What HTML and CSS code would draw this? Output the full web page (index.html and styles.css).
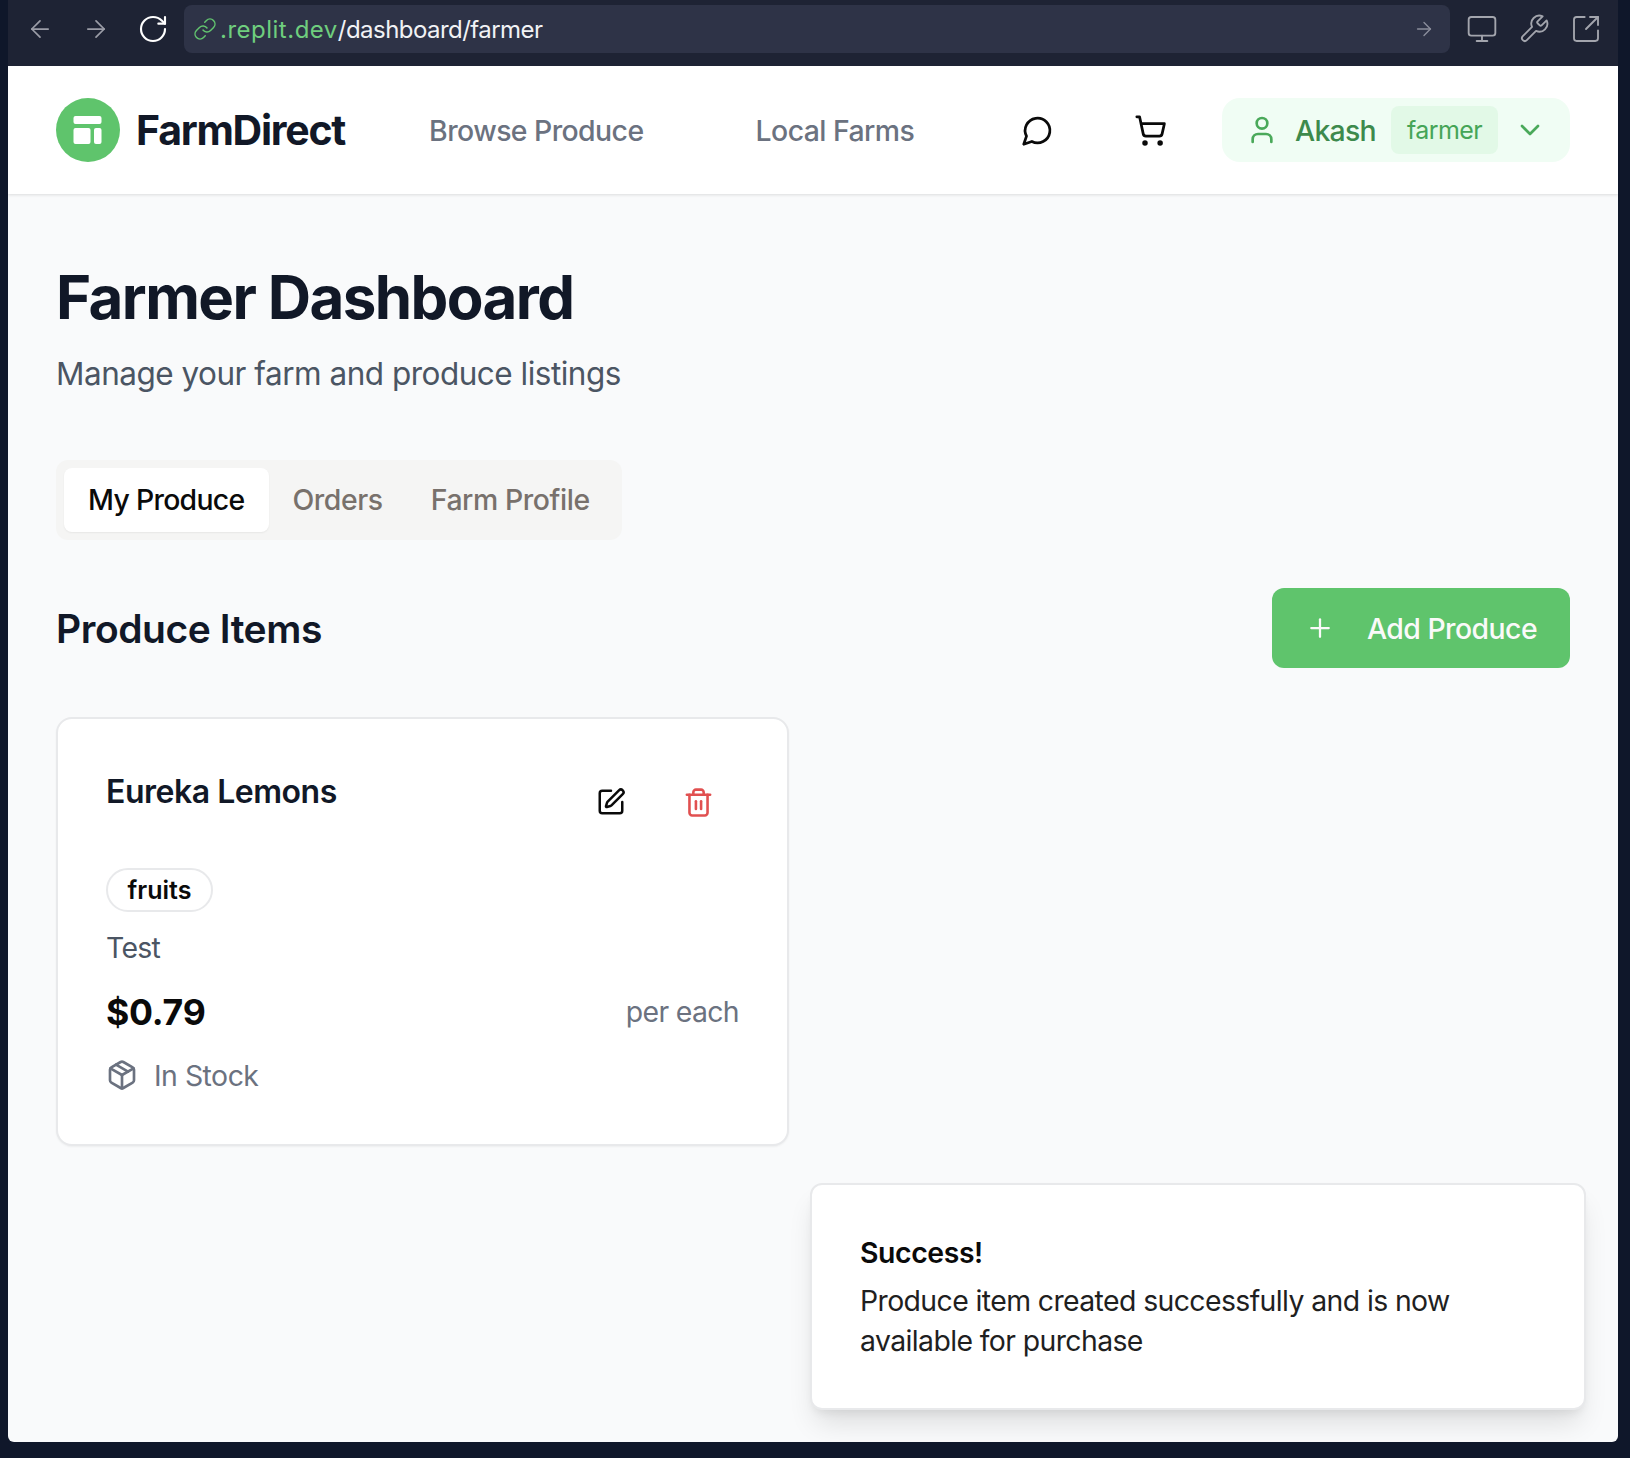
FILE: index.html
```html
<!DOCTYPE html>
<html>
<head>
    <title>FarmDirect</title>
    <link rel="stylesheet" href="styles.css">
</head>
<body>
    <div class="browser-bar">
        <svg class="bar-icon dim" viewBox="0 0 24 24"><path d="m12 19-7-7 7-7"/><path d="M19 12H5"/></svg>
        <svg class="bar-icon dim" viewBox="0 0 24 24"><path d="M5 12h14"/><path d="m12 5 7 7-7 7"/></svg>
        <svg class="bar-icon reload" viewBox="0 0 24 24"><path d="M21 12a9 9 0 1 1-9-9c2.52 0 4.93 1 6.74 2.74L21 8"/><path d="M21 3v5h-5"/></svg>
        <div class="address">
            <svg class="link-icon" viewBox="0 0 24 24"><path d="M10 13a5 5 0 0 0 7.54.54l3-3a5 5 0 0 0-7.07-7.07l-1.72 1.71"/><path d="M14 11a5 5 0 0 0-7.54-.54l-3 3a5 5 0 0 0 7.07 7.07l1.71-1.71"/></svg>
            <span class="url"><span class="host">.replit.dev</span>/dashboard/farmer</span>
            <svg class="go-icon" viewBox="0 0 24 24"><path d="M5 12h14"/><path d="m12 5 7 7-7 7"/></svg>
        </div>
        <div class="bar-tools">
            <svg class="tool-icon" viewBox="0 0 24 24"><rect x="2" y="3" width="20" height="14" rx="2"/><path d="M8 21h8"/><path d="M12 17v4"/></svg>
            <svg class="tool-icon" viewBox="0 0 24 24"><path d="M14.7 6.3a1 1 0 0 0 0 1.4l1.6 1.6a1 1 0 0 0 1.4 0l3.77-3.77a6 6 0 0 1-7.94 7.94l-6.91 6.91a2.12 2.12 0 0 1-3-3l6.91-6.91a6 6 0 0 1 7.94-7.94l-3.76 3.76z"/></svg>
            <svg class="tool-icon" viewBox="0 0 24 24"><path d="M21 13v6a2 2 0 0 1-2 2H5a2 2 0 0 1-2-2V5a2 2 0 0 1 2-2h6"/><path d="m21 3-9 9"/><path d="M15 3h6v6"/></svg>
        </div>
    </div>

    <div class="page">
        <header class="topnav">
            <div class="brand">
                <div class="logo">
                    <svg viewBox="0 0 64 64"><rect x="17.5" y="18" width="28" height="8" rx="2"/><rect x="17.5" y="30" width="17" height="16" rx="2"/><rect x="38" y="30" width="7.5" height="16" rx="2"/></svg>
                </div>
                <span class="brand-name">FarmDirect</span>
            </div>
            <nav class="links">
                <a class="link">Browse Produce</a>
                <a class="link">Local Farms</a>
            </nav>
            <svg class="nav-icon chat" viewBox="0 0 24 24"><path d="M7.9 20A9 9 0 1 0 4 16.1L2 22Z"/></svg>
            <svg class="nav-icon cart" viewBox="0 0 24 24"><circle cx="8" cy="21" r="1"/><circle cx="19" cy="21" r="1"/><path d="M2.05 2.05h2l2.66 12.42a2 2 0 0 0 2 1.58h9.78a2 2 0 0 0 1.95-1.57l1.65-7.43H5.12"/></svg>
            <div class="user-pill">
                <svg class="user-icon" viewBox="0 0 24 24"><path d="M19 21v-2a4 4 0 0 0-4-4H9a4 4 0 0 0-4 4v2"/><circle cx="12" cy="7" r="4"/></svg>
                <span class="user-name">Akash</span>
                <span class="role">farmer</span>
                <svg class="chevron" viewBox="0 0 24 24"><path d="m6 9 6 6 6-6"/></svg>
            </div>
        </header>

        <main class="content">
            <h1>Farmer Dashboard</h1>
            <p class="subtitle">Manage your farm and produce listings</p>

            <div class="tabs">
                <div class="tab active">My Produce</div>
                <div class="tab">Orders</div>
                <div class="tab">Farm Profile</div>
            </div>

            <div class="section-head">
                <h2>Produce Items</h2>
                <button class="add-btn" type="button">
                    <svg viewBox="0 0 24 24"><path d="M5 12h14"/><path d="M12 5v14"/></svg>
                    Add Produce
                </button>
            </div>

            <div class="card">
                <div class="card-top">
                    <h3>Eureka Lemons</h3>
                    <div class="card-actions">
                        <svg class="edit" viewBox="0 0 24 24"><path d="M12 3H5a2 2 0 0 0-2 2v14a2 2 0 0 0 2 2h14a2 2 0 0 0 2-2v-7"/><path d="M18.375 2.625a1 1 0 0 1 3 3l-9.013 9.014a2 2 0 0 1-.853.505l-2.873.84a.5.5 0 0 1-.62-.62l.84-2.873a2 2 0 0 1 .506-.852z"/></svg>
                        <svg class="trash" viewBox="0 0 24 24"><path d="M3 6h18"/><path d="M19 6v14c0 1-1 2-2 2H7c-1 0-2-1-2-2V6"/><path d="M8 6V4c0-1 1-2 2-2h4c1 0 2 1 2 2v2"/><path d="M10 11v6"/><path d="M14 11v6"/></svg>
                    </div>
                </div>
                <span class="badge">fruits</span>
                <p class="desc">Test</p>
                <div class="price-row">
                    <span class="price">$0.79</span>
                    <span class="unit">per each</span>
                </div>
                <div class="stock">
                    <svg viewBox="0 0 24 24"><path d="m7.5 4.27 9 5.15"/><path d="M21 8a2 2 0 0 0-1-1.73l-7-4a2 2 0 0 0-2 0l-7 4A2 2 0 0 0 3 8v8a2 2 0 0 0 1 1.73l7 4a2 2 0 0 0 2 0l7-4A2 2 0 0 0 21 16Z"/><path d="m3.3 7 8.7 5 8.7-5"/><path d="M12 22V12"/></svg>
                    In Stock
                </div>
            </div>
        </main>

        <div class="toast">
            <div class="toast-title">Success!</div>
            <div class="toast-text">Produce item created successfully and is now available for purchase</div>
        </div>
    </div>
</body>
</html>
```

FILE: styles.css
```css
* {
    box-sizing: border-box;
}

html, body {
    margin: 0;
    height: 1458px;
    overflow: hidden;
}

body {
    background-color: #0f172a;
    font-family: "Inter", "Liberation Sans", sans-serif;
    padding: 0 12px 16px 8px;
    display: flex;
    flex-direction: column;
}

svg {
    fill: none;
    stroke: currentColor;
    stroke-width: 2;
    stroke-linecap: round;
    stroke-linejoin: round;
    flex-shrink: 0;
}

/* browser bar */
.browser-bar {
    height: 66px;
    background-color: #1e2334;
    display: flex;
    align-items: center;
    padding: 0 0 8px 18px;
}

.bar-icon {
    width: 28px;
    height: 28px;
    stroke-width: 1.5;
    margin-right: 28px;
}

.bar-icon.dim {
    color: #9a9ca6;
}

.bar-icon.reload {
    width: 32px;
    height: 32px;
    color: #fff;
    margin-right: 0;
    margin-left: -1px;
    stroke-width: 1.6;
}

.address {
    width: 1266px;
    height: 48px;
    margin-left: 15px;
    background-color: #2e3347;
    border-radius: 8px;
    display: flex;
    align-items: center;
    padding: 0 15px 0 9px;
    font-size: 24px;
    letter-spacing: -0.55px;
    color: #f1f2f5;
}

.link-icon {
    width: 24px;
    height: 24px;
    color: #62c46f;
    stroke-width: 1.5;
    margin-right: 3px;
}

.url {
    flex: 1;
}

.host {
    color: #6fce7e;
    letter-spacing: 0.5px;
}

.go-icon {
    width: 22px;
    height: 22px;
    color: #8b8e9c;
    stroke-width: 1.5;
}

.bar-tools {
    display: flex;
    gap: 20px;
    margin-left: 16px;
    color: #a3a5ad;
}

.tool-icon {
    width: 32px;
    height: 32px;
    stroke-width: 1.4;
}

/* page */
.page {
    flex: 1;
    position: relative;
    background-color: #f9fafb;
    border-bottom-right-radius: 6px;
    border-bottom-left-radius: 6px;
    overflow: hidden;
}

.topnav {
    height: 128px;
    background-color: #fff;
    box-shadow: 0 1px 3px rgba(0, 0, 0, 0.12);
    display: flex;
    align-items: center;
    padding: 0 48px;
    position: relative;
}

.brand {
    display: flex;
    align-items: center;
    gap: 16px;
}

.logo {
    width: 64px;
    height: 64px;
    border-radius: 50%;
    background-color: #5fc46c;
}

.logo svg {
    width: 64px;
    height: 64px;
    fill: #fff;
    stroke: none;
}

.brand-name {
    font-size: 41px;
    font-weight: 700;
    letter-spacing: -1.25px;
    color: #111827;
}

.links {
    display: flex;
    gap: 112px;
    margin-left: 84px;
}

.link {
    font-size: 28.4px;
    font-weight: 500;
    letter-spacing: -0.56px;
    color: #6b7280;
}

.nav-icon {
    width: 33px;
    height: 33px;
    color: #0a0a0a;
}

.chat {
    margin-left: 107px;
}

.cart {
    margin-left: 80px;
}

.user-pill {
    margin-left: auto;
    width: 348px;
    height: 64px;
    background-color: #f0fdf4;
    border-radius: 18px;
    display: flex;
    align-items: center;
    padding: 0 16px 0 24px;
}

.user-icon {
    width: 32px;
    height: 32px;
    color: #4aa95a;
}

.user-name {
    font-size: 28.4px;
    font-weight: 500;
    letter-spacing: -0.7px;
    color: #3d8a4c;
    margin-left: 17px;
}

.role {
    height: 48px;
    line-height: 48px;
    background-color: #e2f9e7;
    color: #45a557;
    border-radius: 8px;
    font-size: 25px;
    letter-spacing: -0.6px;
    padding: 0 16px;
    margin-left: 15px;
}

.chevron {
    width: 32px;
    height: 32px;
    color: #4aa95a;
    margin-left: 16px;
}

/* content */
.content {
    padding: 67px 48px 0;
}

h1 {
    margin: 0;
    font-size: 60px;
    line-height: 72px;
    font-weight: 700;
    letter-spacing: -1.6px;
    color: #111827;
}

.subtitle {
    margin: 20px 0 0;
    font-size: 31.5px;
    line-height: 42px;
    letter-spacing: -0.5px;
    color: #4b5563;
}

.tabs {
    display: inline-flex;
    margin-top: 65px;
    height: 80px;
    padding: 8px;
    background-color: #f5f5f4;
    border-radius: 12px;
    font-size: 28.4px;
    font-weight: 500;
    letter-spacing: -0.42px;
    color: #78716c;
}

.tab {
    padding: 0 24px;
    line-height: 64px;
}

.tab.active {
    letter-spacing: -0.7px;
    background-color: #fff;
    color: #0a0a0a;
    border-radius: 8px;
    box-shadow: 0 1px 2px rgba(0, 0, 0, 0.06);
}

.section-head {
    display: flex;
    align-items: center;
    justify-content: space-between;
    margin-top: 48px;
}

h2 {
    margin: 0;
    font-size: 39px;
    font-weight: 600;
    letter-spacing: -0.45px;
    color: #111827;
}

.add-btn {
    width: 298px;
    height: 80px;
    background-color: #5fc46c;
    color: #fafaf9;
    border: none;
    border-radius: 12px;
    font-family: inherit;
    font-size: 28.4px;
    font-weight: 500;
    letter-spacing: -0.55px;
    display: flex;
    align-items: center;
    gap: 32px;
    padding: 0 0 0 33px;
}

.add-btn svg {
    width: 30px;
    height: 30px;
    stroke-width: 1.8;
}

.card {
    width: 733px;
    height: 429px;
    margin-top: 49px;
    background-color: #fff;
    border: 2px solid #e8e9eb;
    border-radius: 16px;
    box-shadow: 0 1px 2px rgba(0, 0, 0, 0.05);
    padding: 51px 48px 0;
}

.card-top {
    display: flex;
    justify-content: space-between;
    height: 64px;
}

h3 {
    margin: 1px 0 0;
    font-size: 32px;
    line-height: 42px;
    font-weight: 600;
    letter-spacing: -0.48px;
    color: #111827;
}

.card-actions {
    display: flex;
    align-items: center;
    gap: 57px;
    padding-right: 25px;
}

.edit {
    width: 30px;
    height: 30px;
    color: #0a0a0a;
}

.trash {
    width: 31px;
    height: 31px;
    color: #e15050;
}

.badge {
    display: block;
    width: 107px;
    height: 44px;
    line-height: 40px;
    margin-top: 34px;
    text-align: center;
    border: 2px solid #e8e9eb;
    border-radius: 22px;
    font-size: 25px;
    font-weight: 600;
    color: #0a0a0a;
}

.desc {
    margin: 18px 0 0;
    font-size: 28.4px;
    line-height: 36px;
    letter-spacing: -0.7px;
    color: #4b5563;
}

.price-row {
    display: flex;
    align-items: center;
    justify-content: space-between;
    margin-top: 24px;
    height: 44px;
}

.price {
    font-size: 35.6px;
    font-weight: 700;
    letter-spacing: -0.2px;
    color: #0a0a0a;
}

.unit {
    font-size: 28.4px;
    letter-spacing: -0.65px;
    margin-bottom: 2px;
    color: #6b7280;
}

.stock {
    display: flex;
    align-items: center;
    gap: 16px;
    margin-top: 23px;
    height: 36px;
    font-size: 28.4px;
    letter-spacing: -0.5px;
    color: #6b7280;
}

.stock svg {
    width: 32px;
    height: 32px;
}

/* toast, sits over the page corner */
.toast {
    position: absolute;
    right: 32px;
    bottom: 32px;
    width: 776px;
    height: 227px;
    background-color: #fff;
    border: 2px solid #e8e9eb;
    border-radius: 12px;
    box-shadow: 0 18px 28px -6px rgba(0, 0, 0, 0.12), 0 6px 10px -4px rgba(0, 0, 0, 0.08);
    padding: 48px;
}

.toast-title {
    font-size: 28.4px;
    line-height: 40px;
    font-weight: 600;
    letter-spacing: -0.4px;
    color: #0a0a0a;
}

.toast-text {
    margin-top: 8px;
    font-size: 28.4px;
    line-height: 40px;
    letter-spacing: -0.6px;
    color: #1f1f1f;
}
```
